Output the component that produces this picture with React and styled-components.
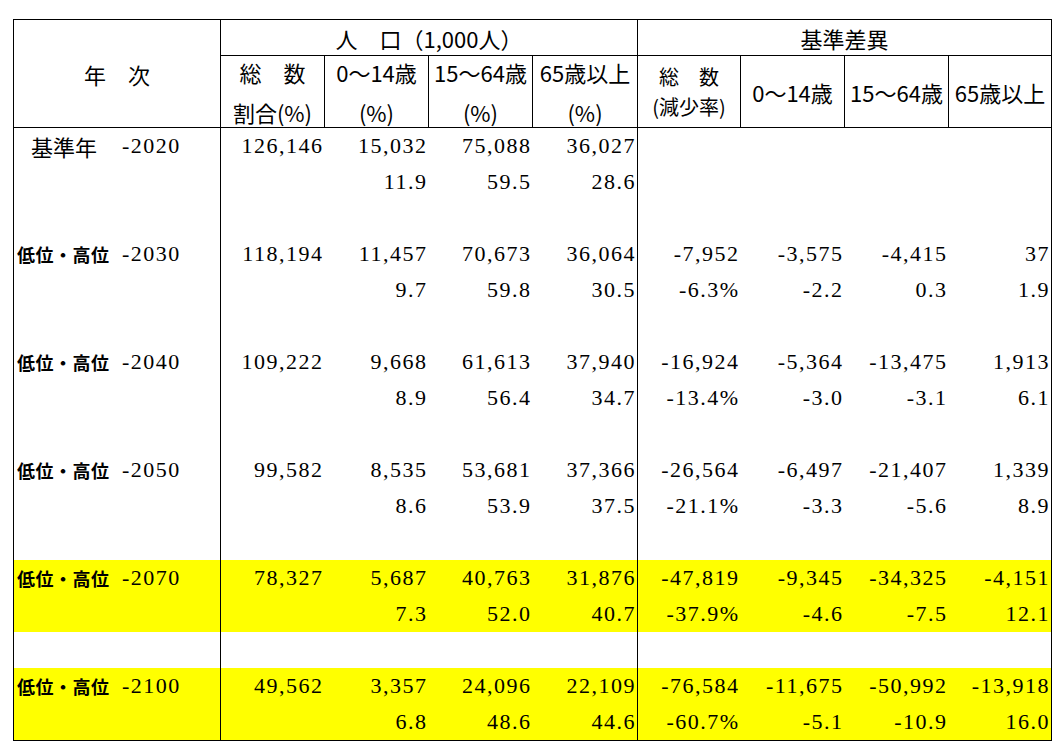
import React from "react";
import styled, { createGlobalStyle } from "styled-components";

const GlobalStyle = createGlobalStyle`
  html, body {
    margin: 0;
    padding: 0;
    background: #fff;
  }
  body {
    font-family: "Noto Sans CJK JP", sans-serif;
    color: #000;
  }
`;

const Page = styled.div`
  width: 1053px;
  height: 751px;
  box-sizing: border-box;
  padding: 19px 0 0 13px;
  overflow: hidden;
`;

const Table = styled.table`
  border-collapse: collapse;
  table-layout: fixed;
  width: 1039px;
  border: 1px solid #000;
`;

const Th = styled.th`
  border: 1px solid #000;
  padding: 0;
  height: ${(p) => p.$h || 35}px;
  font-family: "Noto Sans CJK JP", sans-serif;
  font-weight: 400;
  font-size: 22px;
  line-height: 1;
  text-align: center;
  vertical-align: middle;
  white-space: nowrap;
`;

const Lines = styled.div`
  height: 71px;
  display: flex;
  flex-direction: column;
  justify-content: center;
  align-items: center;
  line-height: ${(p) => p.$lh}px;
  font-size: ${(p) => p.$fs || 22}px;
  overflow: visible;
`;

const Row = styled.tr`
  background: ${(p) => (p.$hl ? "#ffff00" : "transparent")};
`;

const YearCell = styled.td`
  border-right: 1px solid #000;
  padding: 0;
  height: 36px;
`;

const YearWrap = styled.div`
  display: flex;
  align-items: center;
  height: 36px;
`;

const Label = styled.span`
  width: ${(p) => (p.$bold ? 105 : 91)}px;
  padding-left: ${(p) => (p.$bold ? 3 : 17)}px;
  font-family: "Noto Sans CJK JP", sans-serif;
  font-size: ${(p) => (p.$bold ? 18 : 22)}px;
  font-weight: ${(p) => (p.$bold ? 700 : 400)};
  letter-spacing: ${(p) => (p.$bold ? 0.5 : 0)}px;
  white-space: nowrap;
`;

const Year = styled.span`
  font-family: "Liberation Serif", serif;
  font-size: 22px;
  letter-spacing: 1.5px;
`;

const Num = styled.td`
  padding: 0 1px 0 0;
  height: 36px;
  text-align: right;
  vertical-align: middle;
  font-family: "Liberation Serif", serif;
  font-size: 22px;
  letter-spacing: 1.5px;
  white-space: nowrap;
  border-right: ${(p) => (p.$divider ? "1px solid #000" : "none")};
`;

const groups = [
  {
    label: "基準年",
    year: "-2020",
    pop: ["126,146", "15,032", "75,088", "36,027"],
    pct: ["", "11.9", "59.5", "28.6"],
    diff: ["", "", "", ""],
    rate: ["", "", "", ""],
  },
  {
    label: "低位・高位",
    bold: true,
    year: "-2030",
    pop: ["118,194", "11,457", "70,673", "36,064"],
    pct: ["", "9.7", "59.8", "30.5"],
    diff: ["-7,952", "-3,575", "-4,415", "37"],
    rate: ["-6.3%", "-2.2", "0.3", "1.9"],
  },
  {
    label: "低位・高位",
    bold: true,
    year: "-2040",
    pop: ["109,222", "9,668", "61,613", "37,940"],
    pct: ["", "8.9", "56.4", "34.7"],
    diff: ["-16,924", "-5,364", "-13,475", "1,913"],
    rate: ["-13.4%", "-3.0", "-3.1", "6.1"],
  },
  {
    label: "低位・高位",
    bold: true,
    year: "-2050",
    pop: ["99,582", "8,535", "53,681", "37,366"],
    pct: ["", "8.6", "53.9", "37.5"],
    diff: ["-26,564", "-6,497", "-21,407", "1,339"],
    rate: ["-21.1%", "-3.3", "-5.6", "8.9"],
  },
  {
    label: "低位・高位",
    bold: true,
    hl: true,
    year: "-2070",
    pop: ["78,327", "5,687", "40,763", "31,876"],
    pct: ["", "7.3", "52.0", "40.7"],
    diff: ["-47,819", "-9,345", "-34,325", "-4,151"],
    rate: ["-37.9%", "-4.6", "-7.5", "12.1"],
  },
  {
    label: "低位・高位",
    bold: true,
    hl: true,
    last: true,
    year: "-2100",
    pop: ["49,562", "3,357", "24,096", "22,109"],
    pct: ["", "6.8", "48.6", "44.6"],
    diff: ["-76,584", "-11,675", "-50,992", "-13,918"],
    rate: ["-60.7%", "-5.1", "-10.9", "16.0"],
  },
];

function DataRow({ hl, label, bold, year, left, right }) {
  return (
    <Row $hl={hl}>
      <YearCell>
        <YearWrap>
          <Label $bold={bold}>{label}</Label>
          <Year>{year}</Year>
        </YearWrap>
      </YearCell>
      {left.map((v, i) => (
        <Num key={"l" + i} $divider={i === 3}>
          {v}
        </Num>
      ))}
      {right.map((v, i) => (
        <Num key={"r" + i}>{v}</Num>
      ))}
    </Row>
  );
}

const blank = ["", "", "", ""];

export default function App() {
  return (
    <>
      <GlobalStyle />
      <Page>
        <Table>
          <colgroup>
            <col style={{ width: 207 }} />
            <col style={{ width: 104 }} />
            <col style={{ width: 104 }} />
            <col style={{ width: 104 }} />
            <col style={{ width: 105 }} />
            <col style={{ width: 103 }} />
            <col style={{ width: 104 }} />
            <col style={{ width: 104 }} />
            <col style={{ width: 103 }} />
          </colgroup>
          <thead>
            <tr>
              <Th rowSpan={2}>年　次</Th>
              <Th colSpan={4}>人　口（1,000人）</Th>
              <Th colSpan={4}>基準差異</Th>
            </tr>
            <tr>
              <Th $h={71}>
                <Lines $lh={40}>
                  <span>総　数</span>
                  <span>割合(%)</span>
                </Lines>
              </Th>
              <Th $h={71}>
                <Lines $lh={40}>
                  <span>0～14歳</span>
                  <span>(%)</span>
                </Lines>
              </Th>
              <Th $h={71}>
                <Lines $lh={40}>
                  <span>15～64歳</span>
                  <span>(%)</span>
                </Lines>
              </Th>
              <Th $h={71}>
                <Lines $lh={40}>
                  <span>65歳以上</span>
                  <span>(%)</span>
                </Lines>
              </Th>
              <Th $h={71}>
                <Lines $lh={30} $fs={20}>
                  <span>総　数</span>
                  <span>(減少率)</span>
                </Lines>
              </Th>
              <Th $h={71}>0～14歳</Th>
              <Th $h={71}>15～64歳</Th>
              <Th $h={71}>65歳以上</Th>
            </tr>
          </thead>
          <tbody>
            {groups.map((g) => (
              <React.Fragment key={g.year}>
                <DataRow
                  hl={g.hl}
                  label={g.label}
                  bold={g.bold}
                  year={g.year}
                  left={g.pop}
                  right={g.diff}
                />
                <DataRow hl={g.hl} left={g.pct} right={g.rate} />
                {!g.last && <DataRow left={blank} right={blank} />}
              </React.Fragment>
            ))}
          </tbody>
        </Table>
      </Page>
    </>
  );
}
